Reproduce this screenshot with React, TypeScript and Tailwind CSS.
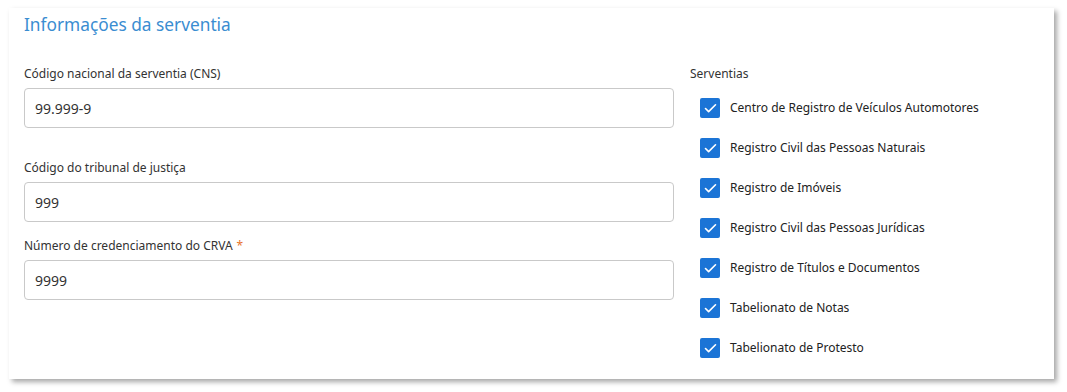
import { Check } from "lucide-react";

const serventias = [
  "Centro de Registro de Veículos Automotores",
  "Registro Civil das Pessoas Naturais",
  "Registro de Imóveis",
  "Registro Civil das Pessoas Jurídicas",
  "Registro de Títulos e Documentos",
  "Tabelionato de Notas",
  "Tabelionato de Protesto",
];

function Field({
  label,
  value,
  required,
  className,
}: {
  label: string;
  value: string;
  required?: boolean;
  className?: string;
}) {
  return (
    <div className={className}>
      <label className="block h-4 text-[12px] leading-4 text-[#333]">
        {label}
        {required && <span className="ml-1 text-[#e8742c]">*</span>}
      </label>
      <input
        readOnly
        value={value}
        className="mt-[6px] block h-10 w-full rounded-[4px] border border-[#c9c9c9] bg-white px-[10px] text-[14px] text-[#333] outline-none"
      />
    </div>
  );
}

export default function App() {
  return (
    <div
      className="h-[392px] w-[1067px] bg-white pl-[9px] pt-[8px]"
      style={{ fontFamily: '"Segoe UI", "Noto Sans", "Open Sans", sans-serif' }}
    >
      <div className="h-[371px] w-[1045px] bg-white px-[15px] pt-[5px] shadow-[3px_3px_5px_rgba(0,0,0,0.35)]">
        <h2 className="h-6 text-[17.3px] leading-6 text-[#3a8dd1]">
          Informações da serventia
        </h2>

        <div className="mt-[29px] flex gap-4">
          <div className="w-[650px]">
            <Field label="Código nacional da serventia (CNS)" value="99.999-9" />
            <Field
              label="Código do tribunal de justiça"
              value="999"
              className="mt-8"
            />
            <Field
              label="Número de credenciamento do CRVA"
              value="9999"
              required
              className="mt-4"
            />
          </div>

          <div className="flex-1">
            <div className="h-4 text-[12px] leading-4 text-[#333]">Serventias</div>
            <ul className="mt-[16px] flex flex-col gap-5 pl-[10px]">
              {serventias.map((s) => (
                <li key={s} className="flex h-5 items-center gap-[10px]">
                  <span className="flex h-5 w-5 items-center justify-center rounded-[2px] bg-[#1b74d6]">
                    <Check size={15} strokeWidth={2.6} className="text-white" />
                  </span>
                  <span className="text-[12px] text-[#222]">{s}</span>
                </li>
              ))}
            </ul>
          </div>
        </div>
      </div>
    </div>
  );
}
